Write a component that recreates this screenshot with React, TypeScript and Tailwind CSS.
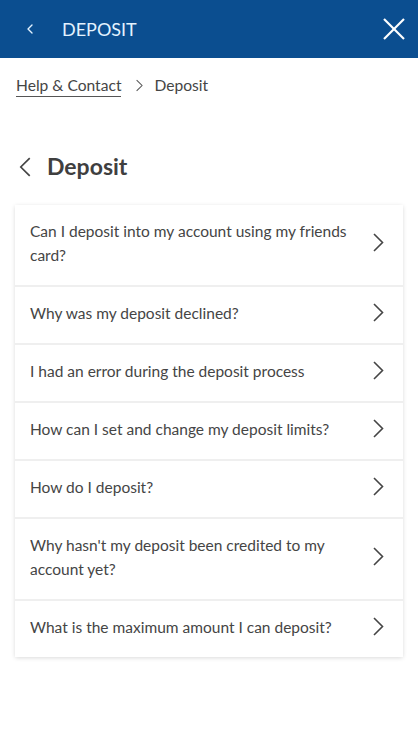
import { ChevronLeft } from 'lucide-react'

const questions = [
	'Can I deposit into my account using my friends card?',
	'Why was my deposit declined?',
	'I had an error during the deposit process',
	'How can I set and change my deposit limits?',
	'How do I deposit?',
	"Why hasn't my deposit been credited to my account yet?",
	'What is the maximum amount I can deposit?',
]

const Chevron = ({ className, left }: { className?: string; left?: boolean }) => (
	<svg viewBox="0 0 11 19" fill="none" stroke="currentColor" strokeWidth={1.6} className={className}>
		<polyline points={left ? '10,1 1.5,9.5 10,18' : '1,1 9.5,9.5 1,18'} />
	</svg>
)

export default function App() {
	return (
		<div className="min-h-[736px] w-[418px] bg-white font-['Lato',sans-serif] text-[#454545]">
			<header className="flex h-[58px] items-center bg-[#0b4e90] pl-[22px] pr-[13px]">
				<ChevronLeft className="h-[16px] w-[16px] text-[#e4f3ff]" strokeWidth={2} />
				<h1 className="ml-[24px] flex-1 text-[18px] text-[#e4f3ff]">DEPOSIT</h1>
				<svg viewBox="0 0 22 22" className="h-[22px] w-[22px] text-white" stroke="currentColor" strokeWidth={2.2}>
					<line x1="1" y1="1" x2="21" y2="21" />
					<line x1="21" y1="1" x2="1" y2="21" />
				</svg>
			</header>

			<nav className="flex items-center px-4 pt-[16px] text-[15.6px]">
				<a className="border-b border-[#555] leading-[22px] text-[#454545]">Help &amp; Contact</a>
				<Chevron className="ml-[15px] mr-[11px] h-[15px] w-[7px] text-[#555]" />
				<span>Deposit</span>
			</nav>

			<div className="mt-[52px] flex items-center pl-[19px]">
				<Chevron left className="h-[20px] w-[12px] text-[#454545]" />
				<h2 className="ml-[16px] text-[23px] font-bold text-[#3f3f3f]">Deposit</h2>
			</div>

			<div className="mx-[15px] mt-[21px] rounded-[2px] bg-[#efefef] shadow-[0_1px_4px_rgba(0,0,0,0.15)]">
				<ul className="flex flex-col gap-[2px]">
					{questions.map((q) => (
						<li key={q} className="flex items-center bg-white pb-[18px] pl-[15px] pr-[19px] pt-[14px]">
							<span className="flex-1 pr-[20px] text-[15.5px] leading-[24px]">{q}</span>
							<Chevron className="h-[19px] w-[11px] text-[#454545]" />
						</li>
					))}
				</ul>
			</div>
		</div>
	)
}
